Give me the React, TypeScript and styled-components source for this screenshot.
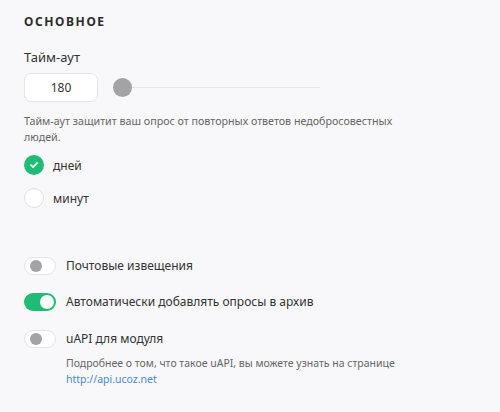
import styled, { createGlobalStyle } from 'styled-components'

const GlobalStyle = createGlobalStyle`
  html, body {
    margin: 0;
    padding: 0;
    background: #f8f8fa;
  }
  body {
    font-family: 'Noto Sans', 'Open Sans', sans-serif;
    color: #333;
  }
`

const radios = [
  { label: 'дней', checked: true },
  { label: 'минут', checked: false },
]

export default function App() {
  return (
    <>
      <GlobalStyle />
      <Page>
        <Title>Основное</Title>
        <Label>Тайм-аут</Label>
        <InputRow>
          <NumberBox>180</NumberBox>
          <Slider>
            <Knob />
            <Track />
          </Slider>
        </InputRow>
        <Hint>
          Тайм-аут защитит ваш опрос от повторных ответов недобросовестных
          людей.
        </Hint>
        <Radios>
          {radios.map(({ label, checked }) => (
            <RadioRow key={label}>
              <RadioCircle $checked={checked}>
                {checked && (
                  <svg width="10" height="10" viewBox="0 0 10 10">
                    <path
                      d="M2 5.2 L4.2 7.2 L8 3"
                      fill="none"
                      stroke="#fff"
                      strokeWidth="1.8"
                      strokeLinecap="round"
                      strokeLinejoin="round"
                    />
                  </svg>
                )}
              </RadioCircle>
              <RadioText>{label}</RadioText>
            </RadioRow>
          ))}
        </Radios>
        <Toggles>
          <ToggleRow>
            <Switch $on={false}>
              <SwitchKnob $on={false} />
            </Switch>
            <ToggleText>Почтовые извещения</ToggleText>
          </ToggleRow>
          <ToggleRow>
            <Switch $on>
              <SwitchKnob $on />
            </Switch>
            <ToggleText>Автоматически добавлять опросы в архив</ToggleText>
          </ToggleRow>
          <ToggleBlock>
            <ToggleRow>
              <Switch $on={false}>
                <SwitchKnob $on={false} />
              </Switch>
              <ToggleText>uAPI для модуля</ToggleText>
            </ToggleRow>
            <Description>
              Подробнее о том, что такое uAPI, вы можете узнать на странице
              <br />
              <Link href="#">http://api.ucoz.net</Link>
            </Description>
          </ToggleBlock>
        </Toggles>
      </Page>
    </>
  )
}

const Page = styled.div`
  display: flex;
  flex-direction: column;
  padding: 14px 24px 20px;
  width: 500px;
  height: 412px;
  box-sizing: border-box;
`

const Title = styled.div`
  font-size: 12px;
  line-height: 16px;
  font-weight: 700;
  letter-spacing: 1.6px;
  text-transform: uppercase;
  color: #2b2b2b;
`

const Label = styled.div`
  margin-top: 18px;
  font-size: 13px;
  line-height: 18px;
  color: #333;
`

const InputRow = styled.div`
  display: flex;
  align-items: center;
  margin-top: 7px;
`

const NumberBox = styled.div`
  width: 74px;
  height: 29px;
  box-sizing: border-box;
  border: 1px solid #e4e4e8;
  border-radius: 7px;
  background: #fff;
  display: flex;
  align-items: center;
  justify-content: center;
  font-size: 12px;
  color: #333;
`

const Slider = styled.div`
  display: flex;
  align-items: center;
  margin-left: 15px;
`

const Knob = styled.div`
  width: 19px;
  height: 19px;
  border-radius: 50%;
  background: #a3a3a6;
`

const Track = styled.div`
  width: 188px;
  height: 1px;
  background: #e6e6ea;
`

const Hint = styled.div`
  margin-top: 11px;
  font-size: 10.7px;
  line-height: 16px;
  color: #666;
  width: 385px;
`

const Radios = styled.div`
  display: flex;
  flex-direction: column;
  gap: 13px;
  margin-top: 10px;
`

const RadioRow = styled.div`
  display: flex;
  align-items: center;
  gap: 9px;
`

const RadioCircle = styled.div<{ $checked: boolean }>`
  width: 20px;
  height: 20px;
  box-sizing: border-box;
  border-radius: 50%;
  display: flex;
  align-items: center;
  justify-content: center;
  background: ${(p) => (p.$checked ? '#20bb74' : '#fff')};
  border: ${(p) => (p.$checked ? 'none' : '1px solid #e2e2e6')};
`

const RadioText = styled.span`
  font-size: 12px;
  color: #333;
`

const Toggles = styled.div`
  display: flex;
  flex-direction: column;
  gap: 18px;
  margin-top: 49px;
`

const ToggleRow = styled.div`
  display: flex;
  align-items: center;
  gap: 10px;
`

const ToggleBlock = styled.div`
  display: flex;
  flex-direction: column;
  margin-top: 1px;
`

const Switch = styled.div<{ $on: boolean }>`
  position: relative;
  width: 32px;
  height: 18px;
  box-sizing: border-box;
  border-radius: 9px;
  background: ${(p) => (p.$on ? '#20bb74' : '#fff')};
  border: ${(p) => (p.$on ? 'none' : '1px solid #e4e4e8')};
  flex-shrink: 0;
`

const SwitchKnob = styled.div<{ $on: boolean }>`
  position: absolute;
  top: 50%;
  transform: translateY(-50%);
  width: ${(p) => (p.$on ? '14px' : '12px')};
  height: ${(p) => (p.$on ? '14px' : '12px')};
  border-radius: 50%;
  left: ${(p) => (p.$on ? '16px' : '5px')};
  background: ${(p) => (p.$on ? '#fff' : '#a3a3a6')};
`

const ToggleText = styled.span`
  font-size: 12px;
  line-height: 18px;
  color: #333;
`

const Description = styled.div`
  margin: 7px 0 0 42px;
  font-size: 10.5px;
  line-height: 16px;
  color: #666;
`

const Link = styled.a`
  color: #4a88d6;
  text-decoration: none;
`
